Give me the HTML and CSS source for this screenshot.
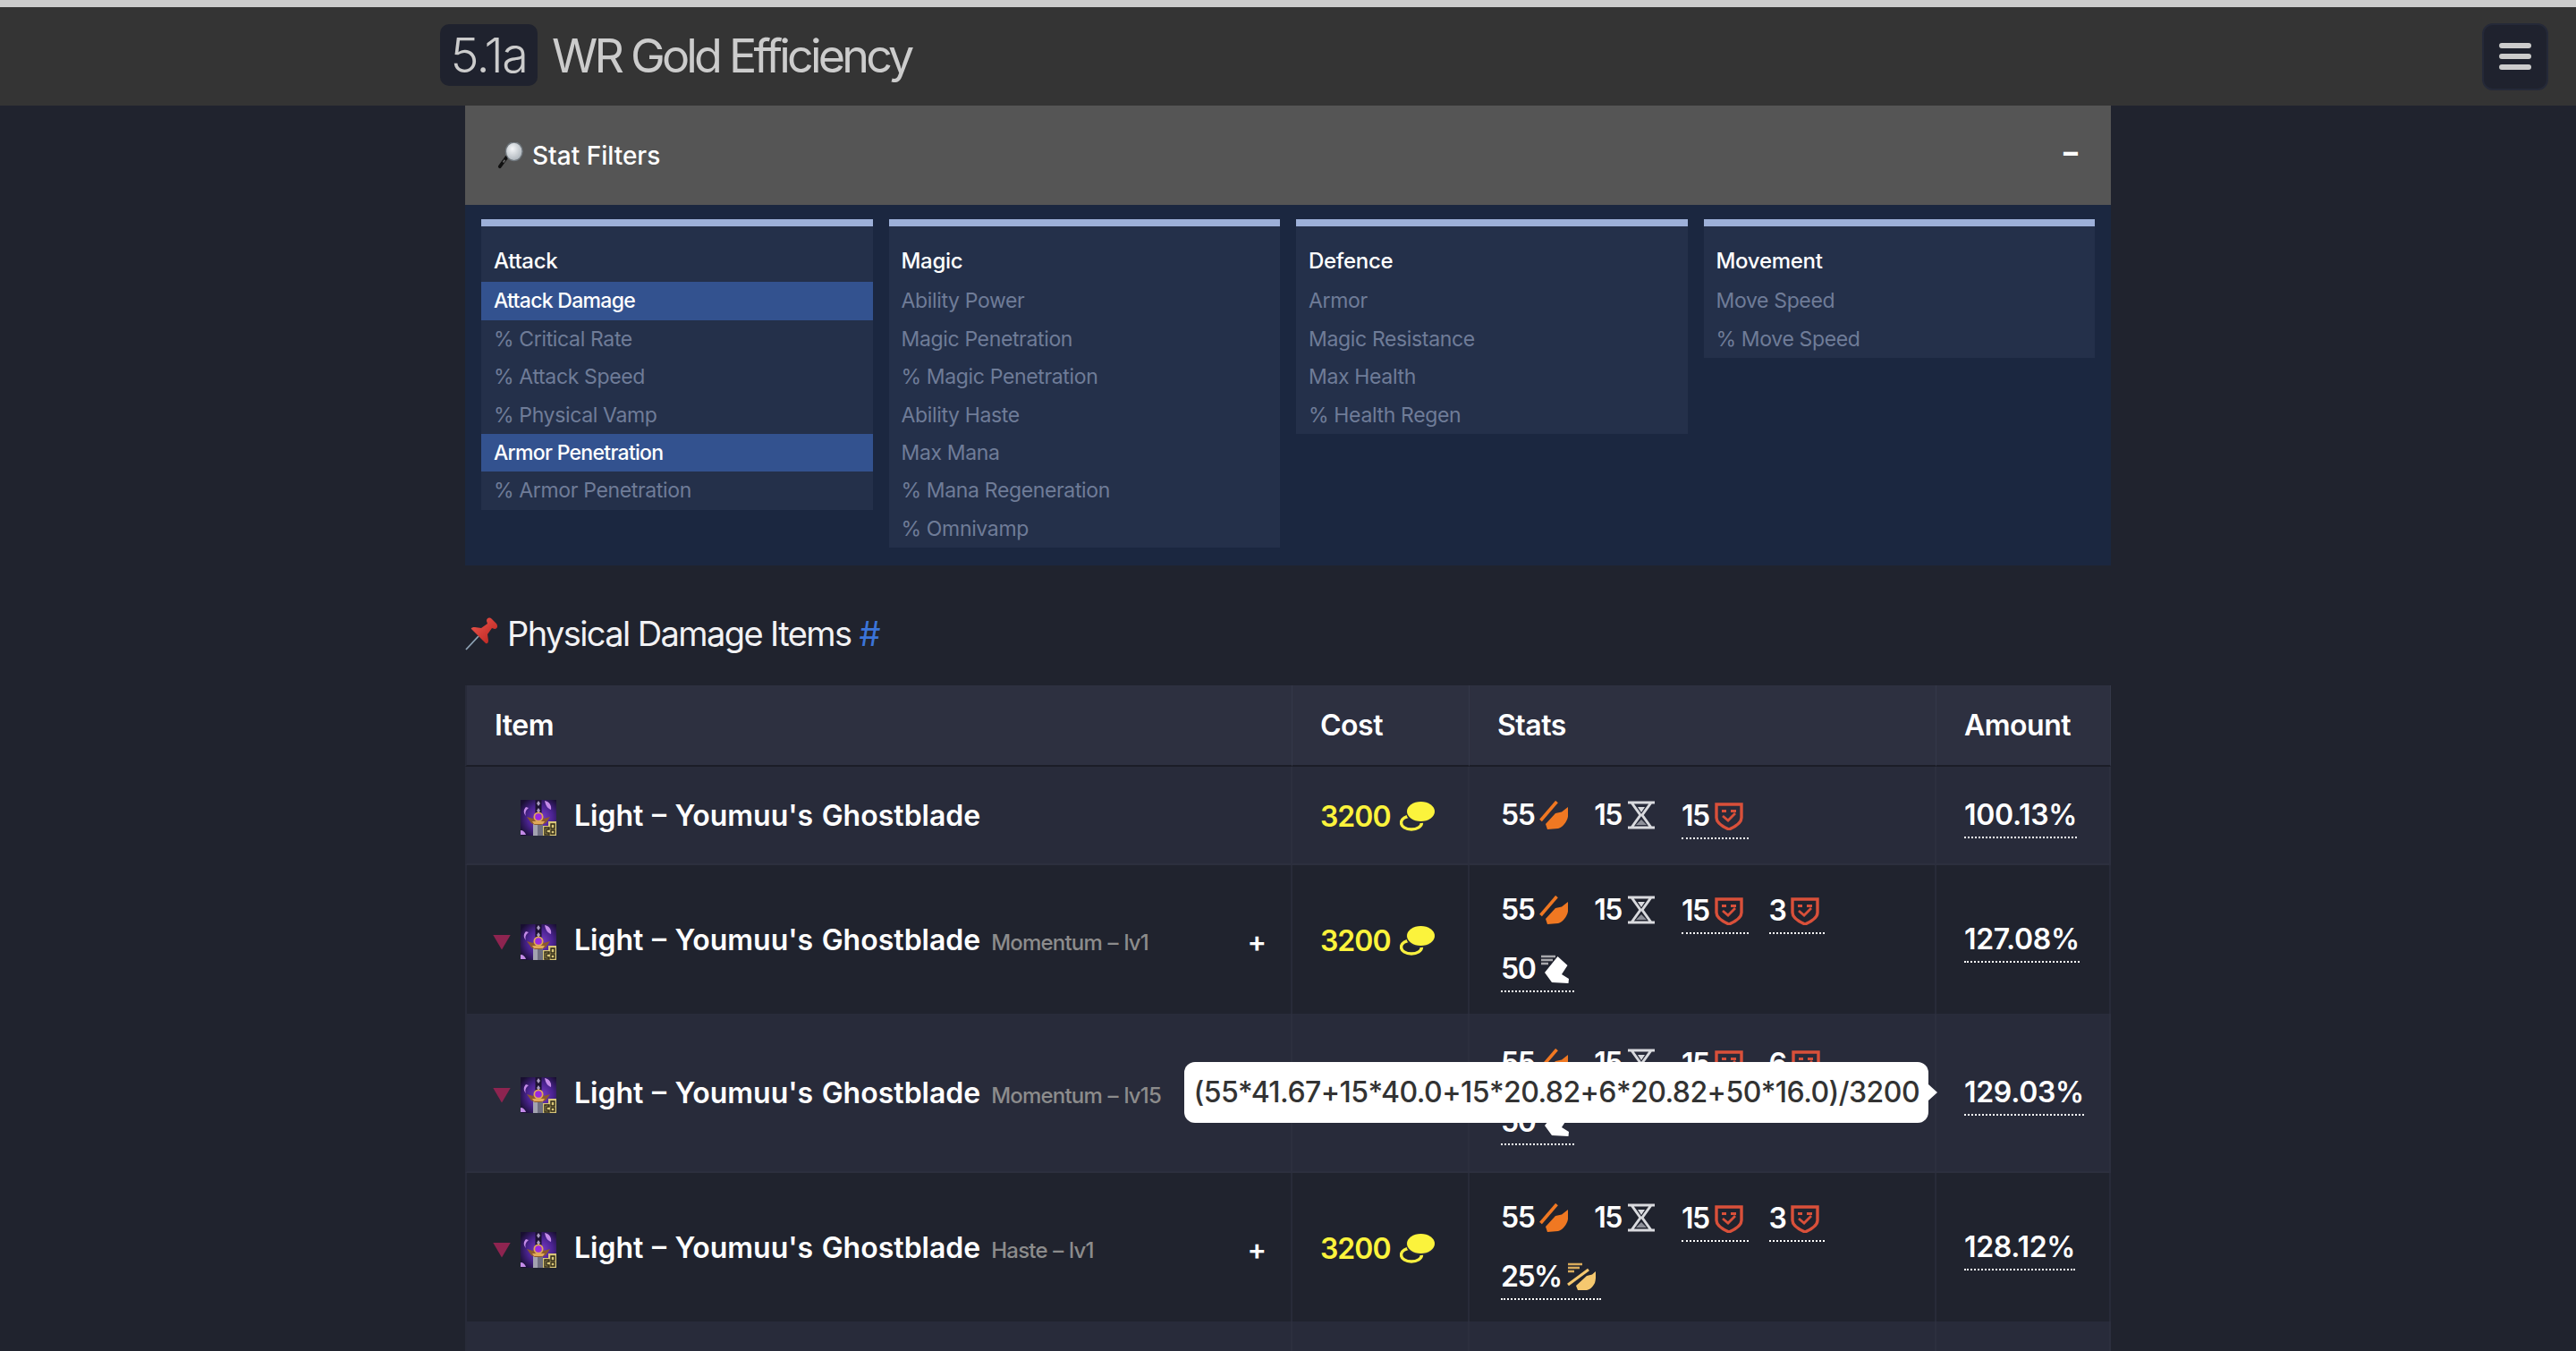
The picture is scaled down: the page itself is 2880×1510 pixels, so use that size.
FILE: index.html
```html
<!DOCTYPE html>
<html lang="en">
<head>
<meta charset="utf-8">
<title>WR Gold Efficiency</title>
<link rel="stylesheet" href="styles.css">
</head>
<body>
<svg class="defs" width="0" height="0" aria-hidden="true">
  <defs>
    <radialGradient id="gPurple" cx="55%" cy="50%" r="65%">
      <stop offset="0" stop-color="#7d3cc8"/><stop offset=".55" stop-color="#4a2390"/><stop offset="1" stop-color="#180f30"/>
    </radialGradient>
    <linearGradient id="gPin" x1="0" y1="0" x2="1" y2="1">
      <stop offset="0" stop-color="#ef5a50"/><stop offset="1" stop-color="#b5201c"/>
    </linearGradient>
    <radialGradient id="gGlass" cx="40%" cy="35%" r="70%">
      <stop offset="0" stop-color="#f4f6f8"/><stop offset="1" stop-color="#a9b1b8"/>
    </radialGradient>
    <symbol id="i-item" viewBox="0 0 40 40">
      <rect width="40" height="40" fill="url(#gPurple)"/>
      <path d="M27 1c5 1 8 5 7 10-3-1-6-4-7-10zM6 8c-3 3-3 7 0 10-1-3-1-6 3-9zM0 34c3 0 5 2 6 5H0z" fill="#c48be8"/>
      <rect x="16.500" y="0" width="7" height="19" fill="#1d1233"/>
      <path d="M20 1l2 3-2 3-2-3zM20 9l2 3-2 3-2-3z" fill="#a99cc0"/>
      <rect x="14" y="27" width="11" height="13" fill="#a3a3b0"/>
      <rect x="19" y="27" width="6" height="13" fill="#6f6f80"/>
      <path d="M7 19l7 2 2-4h8l2 4 7-2-5 7-5 2H16l-4-2z" fill="#8d5a2c"/>
      <path d="M13 24h14l-2 3H15z" fill="#e0a85a"/>
      <circle cx="20" cy="19" r="5.500" fill="#e0a85a"/>
      <circle cx="20" cy="19" r="3.800" fill="#9a28e0"/>
      <path d="M25 29h6v-5h9v16H25z" fill="#d8c679"/>
      <path d="M34 27h4v5h-4zM27 31h5v2h-3v4h3v2h-5zM34 34h4v4h-4z" fill="none" stroke="#2a2414" stroke-width="1.400"/>
    </symbol>
    <symbol id="i-sword" viewBox="0 0 32 32">
      <path d="M19.500 1L1.500 22" stroke="#f07822" stroke-width="3.600" fill="none"/>
      <path d="M32 7c.6 6 .4 11-1 14-2 5-6 9-10 10l-12 1-2-6 11-12 7-1.500z" fill="#f07822"/>
    </symbol>
    <symbol id="i-haste" viewBox="0 0 32 32">
      <path d="M1 2h16M1 6h13M1 10h7" stroke="#d8ab5c" stroke-width="2.600" fill="none"/>
      <path d="M24 8L1 25" stroke="#f5c86f" stroke-width="3.200" fill="none"/>
      <path d="M32 10c.4 5 0 10-1 13-2 4-5 7-9 8H12l-2-5 12-11 6-1.500z" fill="#f5c86f"/>
    </symbol>
    <symbol id="i-hour" viewBox="0 0 32 32">
      <path d="M1 2h30M1 30h30M5 2l10 14L5 30M27 2L17 16l10 14" stroke="#d9dade" stroke-width="3" fill="none"/>
      <path d="M12 7h8l-4 6z" fill="#d9dade"/>
      <path d="M16 21l6 6H10z" fill="#8d8f98"/>
    </symbol>
    <symbol id="i-shield" viewBox="0 0 32 32">
      <path d="M2 3h28v15c0 6-7 10-14 13C9 28 2 24 2 18z" fill="none" stroke="#d9503a" stroke-width="3.400"/>
      <path d="M8 9h5v3H8zM18 9h6v3h-6z" fill="#d9503a"/>
      <path d="M9 16l6 5 8-8" fill="none" stroke="#d9503a" stroke-width="2.800"/>
    </symbol>
    <symbol id="i-boot" viewBox="0 0 32 32">
      <path d="M1 2h16M1 6h13M1 10h8" stroke="#a8a8ac" stroke-width="2.600" fill="none"/>
      <path d="M19.500 2L30.500 12 24 22l8 5-.5 5L13 31 5 20z" fill="#fff"/>
    </symbol>
    <symbol id="i-coin" viewBox="0 0 39 33">
      <ellipse cx="13" cy="23.500" rx="11.500" ry="7.500" fill="none" stroke="#f8f040" stroke-width="3.400"/>
      <ellipse cx="23" cy="12" rx="16" ry="12" fill="#282b3a"/>
      <ellipse cx="23.500" cy="11" rx="15.500" ry="11" fill="#fbf33c"/>
    </symbol>
  </defs>
</svg>

<div class="topstrip"></div>
<header class="topbar">
  <span class="badge">5.1a</span>
  <span class="brand">WR Gold Efficiency</span>
  <button class="burger" type="button" aria-label="Menu"><i></i><i></i><i></i></button>
</header>

<main class="page">
  <section class="filters">
    <div class="filters-head">
      <span class="filters-title">
        <svg class="glass" viewBox="0 0 32 32" aria-hidden="true">
          <path d="M11 18L3 29" stroke="#111" stroke-width="4" stroke-linecap="round"/>
          <path d="M9 21l-2 3" stroke="#666" stroke-width="2"/>
          <ellipse cx="20" cy="11" rx="10" ry="11" fill="url(#gGlass)" stroke="#6f767c" stroke-width="1.500"/>
        </svg>
        Stat Filters
      </span>
      <span class="collapse">–</span>
    </div>
    <div class="filters-body">
      <ul class="fcol">
        <li class="ftitle">Attack</li>
        <li class="on">Attack Damage</li>
        <li>% Critical Rate</li>
        <li>% Attack Speed</li>
        <li>% Physical Vamp</li>
        <li class="on">Armor Penetration</li>
        <li>% Armor Penetration</li>
      </ul>
      <ul class="fcol">
        <li class="ftitle">Magic</li>
        <li>Ability Power</li>
        <li>Magic Penetration</li>
        <li>% Magic Penetration</li>
        <li>Ability Haste</li>
        <li>Max Mana</li>
        <li>% Mana Regeneration</li>
        <li>% Omnivamp</li>
      </ul>
      <ul class="fcol">
        <li class="ftitle">Defence</li>
        <li>Armor</li>
        <li>Magic Resistance</li>
        <li>Max Health</li>
        <li>% Health Regen</li>
      </ul>
      <ul class="fcol">
        <li class="ftitle">Movement</li>
        <li>Move Speed</li>
        <li>% Move Speed</li>
      </ul>
    </div>
  </section>

  <h2 class="section-title">
    <svg class="pin" viewBox="0 0 37 37" aria-hidden="true">
      <path d="M1 36L15 21" stroke="#8fa3b5" stroke-width="1.800"/>
      <path d="M7 13l16 16c2 1 3-1 3-3l-1-7 5-7 3 1c3 0 4-3 2-6l-5-5c-3-3-6-1-6 2l1 3-7 5-7-1c-3 0-5 1-4 2z" fill="url(#gPin)"/>
    </svg>
    <span>Physical Damage Items <a class="hash" href="#items">#</a></span>
  </h2>

  <table class="items" id="items">
    <colgroup><col class="c-item"><col class="c-cost"><col class="c-stats"><col class="c-amount"></colgroup>
    <thead>
      <tr><th>Item</th><th>Cost</th><th>Stats</th><th>Amount</th></tr>
    </thead>
    <tbody>
      <tr class="odd">
        <td class="cell-item"><div class="item-row"><span class="tri tri-none"></span><svg class="item-ic"><use href="#i-item"/></svg><span class="item-name">Light – Youmuu's Ghostblade</span></div></td>
        <td><span class="cost">3200<svg class="coin"><use href="#i-coin"/></svg></span></td>
        <td class="stats"><div class="stat-wrap">
          <span class="stat plain">55<svg class="si"><use href="#i-sword"/></svg></span>
          <span class="stat plain">15<svg class="si"><use href="#i-hour"/></svg></span>
          <span class="stat"><span class="dot">15<svg class="si"><use href="#i-shield"/></svg></span></span>
        </div></td>
        <td><span class="amount">100.13%</span></td>
      </tr>
      <tr>
        <td class="cell-item"><div class="item-row"><span class="tri"></span><svg class="item-ic"><use href="#i-item"/></svg><span class="item-name">Light – Youmuu's Ghostblade</span><span class="sub">Momentum – lv1</span><span class="plus">+</span></div></td>
        <td><span class="cost">3200<svg class="coin"><use href="#i-coin"/></svg></span></td>
        <td class="stats"><div class="stat-wrap">
          <span class="stat plain">55<svg class="si"><use href="#i-sword"/></svg></span>
          <span class="stat plain">15<svg class="si"><use href="#i-hour"/></svg></span>
          <span class="stat"><span class="dot">15<svg class="si"><use href="#i-shield"/></svg></span></span>
          <span class="stat"><span class="dot">3<svg class="si"><use href="#i-shield"/></svg></span></span>
          <span class="stat"><span class="dot">50<svg class="si"><use href="#i-boot"/></svg></span></span>
        </div></td>
        <td><span class="amount">127.08%</span></td>
      </tr>
      <tr class="odd tall">
        <td class="cell-item"><div class="item-row"><span class="tri"></span><svg class="item-ic"><use href="#i-item"/></svg><span class="item-name">Light – Youmuu's Ghostblade</span><span class="sub">Momentum – lv15</span><span class="plus">+</span></div></td>
        <td><span class="cost">3200<svg class="coin"><use href="#i-coin"/></svg></span></td>
        <td class="stats"><div class="stat-wrap">
          <span class="stat plain">55<svg class="si"><use href="#i-sword"/></svg></span>
          <span class="stat plain">15<svg class="si"><use href="#i-hour"/></svg></span>
          <span class="stat"><span class="dot">15<svg class="si"><use href="#i-shield"/></svg></span></span>
          <span class="stat"><span class="dot">6<svg class="si"><use href="#i-shield"/></svg></span></span>
          <span class="stat"><span class="dot">50<svg class="si"><use href="#i-boot"/></svg></span></span>
        </div></td>
        <td><span class="amount">129.03%<span class="tooltip">(55*41.67+15*40.0+15*20.82+6*20.82+50*16.0)/3200</span></span></td>
      </tr>
      <tr>
        <td class="cell-item"><div class="item-row"><span class="tri"></span><svg class="item-ic"><use href="#i-item"/></svg><span class="item-name">Light – Youmuu's Ghostblade</span><span class="sub">Haste – lv1</span><span class="plus">+</span></div></td>
        <td><span class="cost">3200<svg class="coin"><use href="#i-coin"/></svg></span></td>
        <td class="stats"><div class="stat-wrap">
          <span class="stat plain">55<svg class="si"><use href="#i-sword"/></svg></span>
          <span class="stat plain">15<svg class="si"><use href="#i-hour"/></svg></span>
          <span class="stat"><span class="dot">15<svg class="si"><use href="#i-shield"/></svg></span></span>
          <span class="stat"><span class="dot">3<svg class="si"><use href="#i-shield"/></svg></span></span>
          <span class="stat"><span class="dot">25%<svg class="si"><use href="#i-haste"/></svg></span></span>
        </div></td>
        <td><span class="amount">128.12%</span></td>
      </tr>
      <tr class="odd tail"><td></td><td></td><td></td><td></td></tr>
    </tbody>
  </table>
</main>
</body>
</html>
```

FILE: styles.css
```css
* { box-sizing: border-box; }
html, body { margin: 0; padding: 0; height: 1510px; overflow: hidden; }
body { background: #20232e; color: #fff; font-family: Inter, "Liberation Sans", sans-serif; }
.defs { position: absolute; }

.topstrip { height: 8px; background: #cccccc; }
.topbar { height: 110px; background: #343434; display: flex; align-items: center; padding: 0 31px 0 492px; color: #cccccc; }
.badge { background: #1f222e; height: 69px; width: 109px; border-radius: 10px; display: flex; align-items: center; justify-content: center; font-size: 54px; font-weight: 300; letter-spacing: -1.5px; margin-top: -3px; }
.brand { font-size: 52px; font-weight: 400; letter-spacing: -3.8px; margin-left: 16px; margin-top: -1px; }
.burger { margin-left: auto; width: 74px; height: 75px; background: #1f222e; border: 2px solid #252938; border-radius: 12px; display: flex; flex-direction: column; align-items: center; justify-content: center; gap: 6px; padding: 0; }
.burger i { display: block; width: 36px; height: 6px; border-radius: 3px; background: #cccccc; }

.page { width: 1840px; margin: 0 auto; }
.filters-head { height: 111px; background: #555555; display: flex; align-items: center; justify-content: space-between; padding: 0 37px 0 36px; }
.filters-title { display: flex; align-items: center; gap: 9px; font-size: 28px; font-weight: 500; }
.glass { width: 30px; height: 30px; }
.collapse { font-size: 32px; font-weight: 800; line-height: 1; margin-top: -8px; }
.filters-body { background: #1b2740; padding: 16px 18px 21px; display: grid; grid-template-columns: repeat(4, 1fr); gap: 18px; align-items: start; height: 403px; }
.fcol { list-style: none; margin: 0; padding: 20px 0 0; background: #24304a; border-top: 8px solid #9db0d9; }
.fcol li { height: 42.4px; line-height: 42.4px; padding: 0 14px; font-size: 23px; letter-spacing: -.35px; color: #6f7c98; }
.fcol .ftitle { color: #fff; font-size: 24px; letter-spacing: -.3px; font-weight: 500; line-height: 38px; }
.fcol .on { background: #33528f; color: #fff; font-weight: 500; letter-spacing: -.7px; }

.section-title { margin: 48px 0 30px; height: 56px; display: flex; align-items: center; gap: 10px; font-size: 38px; font-weight: 400; letter-spacing: -1.6px; color: #f2f2f4; }
.pin { width: 37px; height: 37px; }
.hash { color: #3b74d8; text-decoration: none; }

.items { width: 1840px; table-layout: fixed; border-collapse: separate; border-spacing: 0; }
.c-item { width: 925px; }
.c-cost { width: 198px; }
.c-stats { width: 522px; }
.c-amount { width: 195px; }
.items th { height: 91px; background: #2d3040; border-bottom: 2px solid #1b1d27; border-right: 1px solid #343849; padding: 0 31px; text-align: left; font-size: 32px; font-weight: 600; letter-spacing: -.5px; }
.items td { padding: 0 31px; vertical-align: middle; height: 110px; border-right: 2px solid #282b39; }
.items td:first-child, .items th:first-child { border-left: 2px solid #282b39; }
.odd td { background: #282b3a; border-bottom: 2px solid #2c2f3e; }
.odd td { border-right-color: #2c2f3e; }
.items .cell-item { padding: 6px 27px 0 29px; }
.item-row { display: flex; align-items: center; }
.tri { width: 20px; height: 17px; margin-right: 11px; background: #8e2450; clip-path: polygon(0 0, 100% 0, 50% 100%); }
.tri-none { background: none; }
.item-ic { width: 40px; height: 40px; margin-right: 20px; flex: none; }
.item-name { font-size: 32px; font-weight: 600; word-spacing: 1.5px; margin-top: -5px; }
.sub { font-size: 24px; font-weight: 500; letter-spacing: -.8px; word-spacing: 1px; color: #8c8c8c; margin-left: 12px; }
.plus { margin-left: auto; font-size: 32px; font-weight: 600; margin-top: -2px; }
.cost { display: inline-flex; align-items: center; font-size: 32px; font-weight: 600; letter-spacing: -1px; color: #fbf33c; margin-top: 2px; }
.coin { width: 39px; height: 33px; margin-left: 10px; }
.items .stats { padding-top: 18px; padding-bottom: 18px; }
.items .tall .stats { padding-top: 23px; padding-bottom: 23px; }
.stat-wrap { display: flex; flex-wrap: wrap; margin-left: 4px; margin-right: -6px; }
.stat { height: 61px; margin: 0 23px 4px 0; padding-top: 9px; font-size: 32px; font-weight: 600; letter-spacing: -1.5px; line-height: 48px; display: inline-flex; align-items: flex-start; }
.stat.plain { padding-top: 8px; padding-right: 6px; }
.dot { display: inline-flex; align-items: center; height: 50px; border-bottom: 2px dotted #fff; padding-right: 6px; }
.si { width: 32px; height: 32px; margin-left: 6px; flex: none; }
.stat.plain .si { margin-top: 8px; }
.amount { position: relative; display: inline-block; font-size: 32px; font-weight: 600; letter-spacing: -.3px; line-height: 48px; border-bottom: 2px dotted #fff; margin-top: 2px; }
.tooltip { position: absolute; right: 100%; top: 50%; margin-right: 40px; transform: translateY(-50%); height: 68px; padding: 0 10px; display: flex; align-items: center; background: #fff; color: #333; border-radius: 12px; font-size: 32px; font-weight: 500; letter-spacing: -.55px; white-space: nowrap; }
.tooltip::after { content: ""; position: absolute; left: 100%; top: 50%; margin-top: -9px; border-left: 10px solid #fff; border-top: 9px solid transparent; border-bottom: 9px solid transparent; }
.tail td { height: 33px; border-bottom: 0; }
```
